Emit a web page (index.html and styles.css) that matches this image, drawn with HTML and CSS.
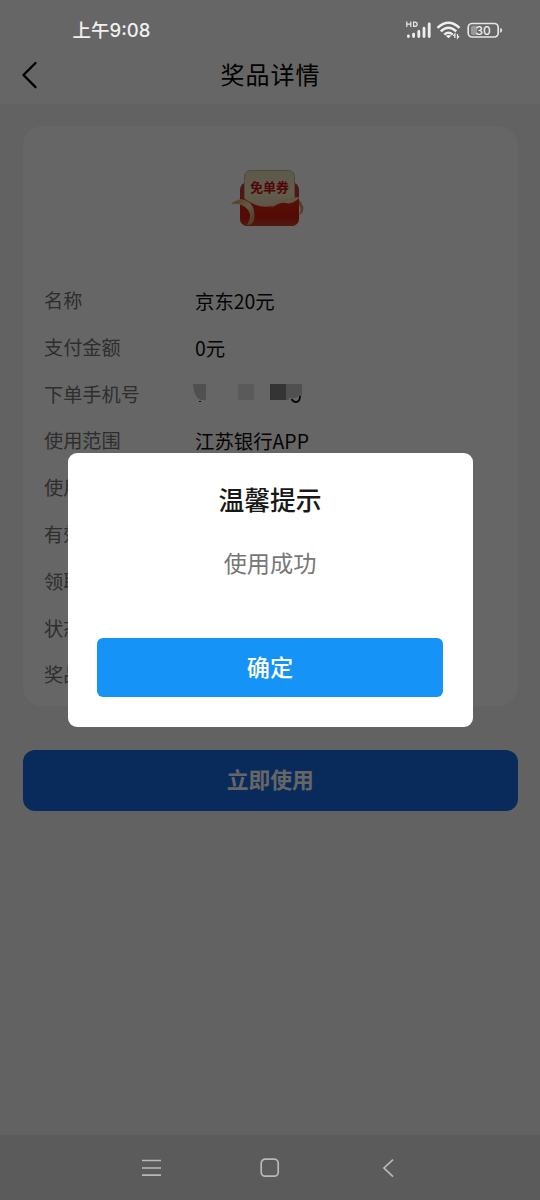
FILE: index.html
```html
<!DOCTYPE html>
<html lang="zh-CN">
<head>
<meta charset="utf-8">
<title>奖品详情</title>
<link rel="stylesheet" href="styles.css">
</head>
<body>
<div class="phone">
  <main class="page">
    <header class="header">
      <svg class="back" width="18" height="30" viewBox="0 0 18 30"><path d="M15.500 3 3.500 15 15.500 27.200" fill="none" stroke="#000" stroke-width="2.400" stroke-linecap="round" stroke-linejoin="round"/></svg>
      <h1 class="title">奖品详情</h1>
    </header>
    <section class="card">
      <svg class="prize" width="80" height="64" viewBox="0 0 80 64">
        <defs>
          <linearGradient id="red" x1="0" y1="0" x2="0" y2="1"><stop offset="0" stop-color="#e02818"/><stop offset=".7" stop-color="#d01c0a"/><stop offset="1" stop-color="#c84030"/></linearGradient>
          <linearGradient id="cream" x1="0" y1="0" x2="0" y2="1"><stop offset="0" stop-color="#e9dfb8"/><stop offset=".5" stop-color="#f3e6c4"/><stop offset="1" stop-color="#e3c794"/></linearGradient>
          <linearGradient id="gold" x1="0" y1="0" x2="1" y2="1"><stop offset="0" stop-color="#cf935a"/><stop offset=".5" stop-color="#f5dfb0"/><stop offset="1" stop-color="#c98050"/></linearGradient>
        </defs>
        <rect x="11" y="18" width="59" height="44" rx="8" fill="#bd3e36"/>
        <rect x="15.500" y="6.500" width="50" height="46" rx="6" fill="url(#cream)" stroke="#c9b880"/>
        <path d="M11 32Q15 34 19 37Q31 45 44 42Q58 34 70 33V54Q70 62 62 62H19Q11 62 11 54Z" fill="url(#red)"/>
        <path d="M42 44Q50 35 71 33Q64 41 57 39Q51 38 42 44Z" fill="url(#gold)"/>
        <path d="M2 40Q5 37 12 35Q28 38 25 57Q23 61 18 61Q25 50 16 43Q10 39 2 40Z" fill="url(#gold)"/>
        <path d="M70 36Q77 43 73 49L70 51Q73 45 70 41Z" fill="#d6986b"/>
        <text class="coupon" x="40.500" y="27.500" text-anchor="middle">免单券</text>
      </svg>
      <dl class="details">
        <dt>名称</dt><dd>京东20元</dd>
        <dt>支付金额</dt><dd>0元</dd>
        <dt>下单手机号</dt>
        <dd><svg class="masked" width="112" height="24" viewBox="0 0 112 24"><path d="M0 2h13v16H9Q1 17 0 2Z" fill="#c8c8c8"/><path d="M6 19h2v1H6Z" fill="#222"/><path d="M45 2h16v16H45Z" fill="#e1e1e1"/><path d="M77 2h16v16H77Z" fill="#838383"/><path d="M98.500 17Q100 20 103 20Q107 20 107 14" fill="none" stroke="#111" stroke-width="1.800"/><path d="M93 2h16v12h-3l-3 2H96v2h-3Z" fill="#c9c9c9"/></svg></dd>
        <dt>使用范围</dt><dd>江苏银行APP</dd>
        <dt>使用说明</dt><dd></dd>
        <dt>有效期</dt><dd></dd>
        <dt>领取时间</dt><dd></dd>
        <dt>状态</dt><dd></dd>
        <dt>奖品说明</dt><dd></dd>
      </dl>
    </section>
    <button class="use">立即使用</button>
  </main>

  <div class="overlay">
    <section class="dialog">
      <h2 class="dialog-title">温馨提示</h2>
      <p class="message">使用成功</p>
      <button class="confirm">确定</button>
    </section>
  </div>

  <div class="status">
    <span class="time">上午9:08</span>
    <svg class="indicators" width="100" height="24" viewBox="0 0 100 24">
      <g fill="none" stroke="#e9e9e9" stroke-width="1.200"><path d="M1.800 1.500v5.500M5.800 1.500v5.500M1.800 4.200h4M8.600 2.100v4.300h1.200q2.400-.2 2.400-2.150T9.800 2.100Z"/></g>
      <g stroke="#efefef" stroke-width="2.800" stroke-linecap="round"><path d="M3.400 16.600v-.6M8.600 16.600v-2.500M13.800 16.600v-5.200M19 16.600V8.200M24.200 16.600V4"/></g>
      <g fill="none" stroke="#efefef" stroke-width="2.500"><path d="M32.500 7.800Q43.500-2.400 54.500 7.800M35.800 11.300Q43.500 4.300 51.200 11.300M39.300 14.600Q43.500 10.900 47.700 14.600"/></g>
      <path d="M40.800 15.800Q43.500 14 46.200 15.800L43.500 18.300Z" fill="#efefef"/>
      <path d="M49.900 18v-4l-1.600 2M52.500 14v4l1.600-2" fill="none" stroke="#efefef" stroke-width="1.200"/>
      <rect x="63.200" y="3.500" width="30" height="13.500" rx="4" fill="none" stroke="#e6e6e6" stroke-width="1.700"/>
      <path d="M68 5.700h4v9.200h-4q-2.200 0-2.200-2.200V7.900Q65.800 5.700 68 5.700Z" fill="#989898"/>
      <path d="M95.200 7.900q1.900 0 1.900 2.400t-1.900 2.400Z" fill="#e6e6e6"/>
      <text class="charge" x="78.200" y="14.600" text-anchor="middle">30</text>
    </svg>
  </div>

  <nav class="nav">
    <svg width="20" height="20" viewBox="0 0 20 20"><path d="M1 2.500h19M1 10h19M1 17.200h19"/></svg>
    <svg width="20" height="20" viewBox="0 0 20 20"><rect x="1.200" y="1.200" width="17" height="17" rx="4"/></svg>
    <svg width="20" height="20" viewBox="0 0 20 20"><path d="M14 1.700 5 10l9 8.600"/></svg>
  </nav>
</div>
</body>
</html>
```
FILE: styles.css
```css
* { box-sizing: border-box; }
body, h1, h2, p, dl, dd { margin: 0; }
body, button { font-family: "Noto Sans CJK SC", sans-serif; }
button { display: block; border: 0; padding: 0; }

.phone {
  position: relative;
  display: flex;
  flex-direction: column;
  width: 540px;
  height: 1200px;
  overflow: hidden;
}

.page { flex: 1; background: #f6f6f6; }

.header {
  display: grid;
  grid-template-columns: 60px 1fr 60px;
  align-items: center;
  height: 104px;
  padding-top: 45px;
  background: #fff;
}
.back { margin: 0 0 0 20px; }
.title {
  padding: 0 0 2px 1px;
  font-size: 24px;
  font-weight: 400;
  line-height: 36px;
  letter-spacing: 1px;
  text-align: center;
}

.card {
  width: 495px;
  height: 580px;
  margin: 22px 0 0 23px;
  padding: 38px 21px 0;
  border-radius: 20px;
  background: #fff;
}
.prize { display: block; margin: 0 0 0 185px; }
.coupon { font: 700 13px "Noto Sans CJK SC", sans-serif; fill: #c90d12; }
.details {
  display: grid;
  grid-template-columns: 151px 1fr;
  grid-auto-rows: 46.8px;
  margin-top: 49px;
  font-size: 19.2px;
  line-height: 47px;
  white-space: nowrap;
}
.details dt { color: #737373; }
.details dd { color: #0c0c0c; font-size: 19.4px; }
.masked { display: block; margin: 11px 0 0 -2px; }

.use {
  width: 494.500px;
  height: 60.500px;
  margin: 44px 0 0 23px;
  padding-bottom: 4px;
  border-radius: 12px;
  background: #146be3;
  color: #fff;
  font-size: 21.8px;
  font-weight: 700;
}

.overlay {
  position: absolute;
  inset: 0 0 65px;
  padding: 453px 67.500px 0;
  background: rgba(0, 0, 0, .6);
}
.dialog {
  height: 273.500px;
  padding: 27px 29.500px 0;
  border-radius: 9px;
  background: #fff;
  text-align: center;
}
.dialog-title {
  color: #181818;
  font-size: 25.8px;
  font-weight: 500;
  line-height: 38px;
}
.message {
  margin-top: 26px;
  color: #777;
  font-size: 23.2px;
  line-height: 36px;
}
.confirm {
  width: 346px;
  height: 59px;
  margin-top: 58px;
  padding-bottom: 4px;
  border-radius: 6px;
  background: #1593f6;
  color: #fff;
  font-size: 23.2px;
  font-weight: 500;
}

.status {
  position: absolute;
  inset: 0 0 auto;
  display: flex;
  justify-content: space-between;
  height: 60px;
  padding: 0 35px 0 72.500px;
}
.time {
  padding-top: 16px;
  color: #f0f0f0;
  font: 500 18.500px/28px Inter, "Noto Sans CJK SC", sans-serif;
}
.indicators { margin-top: 20px; }
.charge { fill: #f0f0f0; font: 500 12px Inter, sans-serif; }

.nav {
  display: flex;
  justify-content: center;
  align-items: center;
  gap: 99px;
  height: 65px;
  background: #5b5b5b;
}
.nav svg { fill: none; stroke: #b9b9b9; stroke-width: 1.700; }
```
